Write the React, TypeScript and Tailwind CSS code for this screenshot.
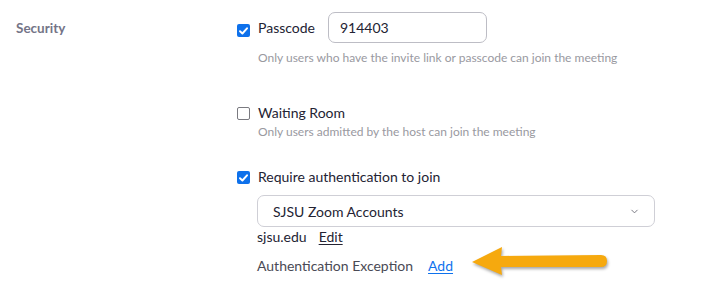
import { ChevronDown } from "lucide-react";

function Check({ checked }: { checked: boolean }) {
  return checked ? (
    <span className="flex h-[13px] w-[13px] shrink-0 items-center justify-center rounded-[2px] bg-[#0e71eb]">
      <svg width="9" height="8" viewBox="0 0 9 8">
        <path d="M1 4.2 L3.4 6.5 L8 1.3" fill="none" stroke="#fff" strokeWidth="1.9" strokeLinecap="round" strokeLinejoin="round" />
      </svg>
    </span>
  ) : (
    <span className="block h-[13px] w-[13px] shrink-0 rounded-[2px] border border-[#7a7a80] bg-white" />
  );
}

function Arrow() {
  return (
    <svg width="150" height="40" viewBox="0 0 150 40" className="ml-[16px] mt-[-13px] mb-[-11px]" style={{ filter: "drop-shadow(1px 2px 1.5px rgba(0,0,0,0.35))" }}>
      <path d="M3 17 L33 2 L32 11 L132 10 Q138 10 138 16 Q138 22 132 22 L32 22 L33 30 Z" fill="#f6a90e" />
    </svg>
  );
}

export default function App() {
  return (
    <div className="flex h-[296px] w-[703px] bg-white font-['Lato',sans-serif] text-[#232333]">
      <div className="w-[237px] shrink-0 pl-4 pt-[18px] text-[13.5px] font-bold text-[#747487]">Security</div>

      <div className="flex flex-col pt-3">
        <div className="flex items-center">
          <span className="mt-[6px]"><Check checked /></span>
          <span className="ml-[8px] text-[14px]">Passcode</span>
          <div className="ml-[13px] flex h-[31px] w-[159px] items-center rounded-[7px] border border-[#bdbdc5] px-[11px] text-[14px]">
            914403
          </div>
        </div>
        <div className="ml-[21px] mt-[6px] text-[12px] text-[#99999f]">
          Only users who have the invite link or passcode can join the meeting
        </div>

        <div className="mt-[35px] flex items-center">
          <span className="mt-[2px]"><Check checked={false} /></span>
          <span className="ml-[8px] text-[14px]">Waiting Room</span>
        </div>
        <div className="ml-[21px] mt-[0px] text-[12px] text-[#99999f]">
          Only users admitted by the host can join the meeting
        </div>

        <div className="mt-[25px] flex items-center">
          <span className="mt-[2px]"><Check checked /></span>
          <span className="ml-[8px] text-[14px]">Require authentication to join</span>
        </div>

        <div className="ml-[20px] mt-[8px] flex h-[32px] w-[398px] items-center justify-between rounded-[7px] border border-[#cfcfd6] pl-[15px] pr-[14px] text-[14px]">
          <span>SJSU Zoom Accounts</span>
          <ChevronDown size={11} strokeWidth={2} className="text-[#6e6e7a]" />
        </div>

        <div className="ml-[20px] mt-[-1px] flex items-center text-[14px]">
          <span>sjsu.edu</span>
          <span className="ml-[12px] underline underline-offset-2">Edit</span>
        </div>

        <div className="ml-[20px] mt-[8px] flex items-center text-[14px] text-[#4a4a55]">
          <span>Authentication Exception</span>
          <span className="ml-[15px] text-[#0e72ed] underline underline-offset-2">Add</span>
          <Arrow />
        </div>
      </div>
    </div>
  );
}
